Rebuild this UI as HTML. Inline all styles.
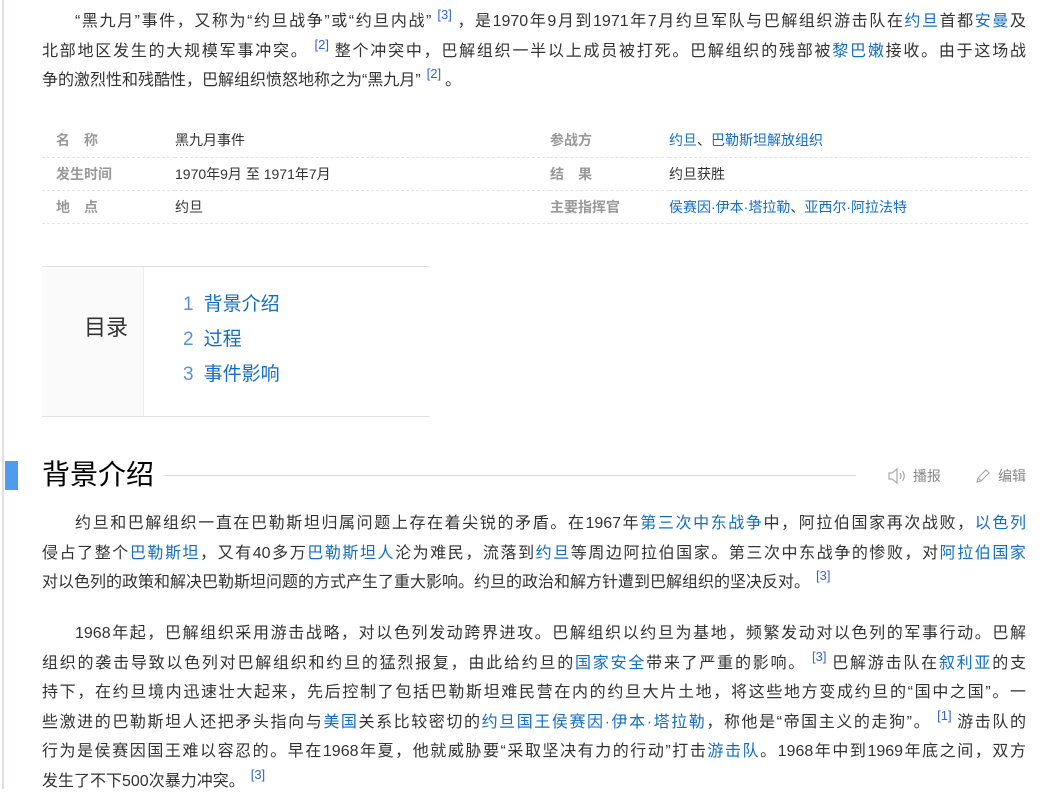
<!DOCTYPE html>
<html><head><meta charset="utf-8"><style>
*{margin:0;padding:0;box-sizing:border-box}
body{width:1056px;height:789px;overflow:hidden;background:#fff;font-family:"Liberation Sans","Noto Sans CJK SC",sans-serif;color:#333;position:relative}
.edge{position:absolute;left:2px;top:0;width:2px;height:789px;background:#e6dde2}
a{color:#136ec2;text-decoration:none}
sup{color:#3366cc;font-size:13px;line-height:0;vertical-align:baseline;position:relative;top:-7px;margin:0 4px 0 6px}
.p{position:absolute;left:42px;width:984px;font-size:16px;line-height:29.5px}
.p div{text-align:justify;text-align-last:justify;height:29.5px;white-space:nowrap;overflow:visible}
.p div.last{text-align-last:left}
.ind{padding-left:33px}
table{position:absolute;left:42px;top:124px;width:986px;border-collapse:collapse;font-size:14px}
td{height:33px;border-bottom:1px dashed #e4e4e4;padding:0;color:#333}
td.l{color:#999;font-weight:bold;padding-left:14px;width:133px}
td.v{width:375px}
td.l2{color:#999;font-weight:bold;width:119px}
.toc{position:absolute;left:42px;top:266px;width:387px;height:151px;border-top:1px solid #e0e0e0;border-bottom:1px solid #e0e0e0}
.toc .lp{position:absolute;left:0;top:0;width:102px;height:149px;background:#fafafa;border-right:1px solid #eee}
.toc .lp span{position:absolute;left:42px;top:43px;font-size:22px;color:#333}
.toc .it{position:absolute;left:141px;font-size:19px;color:#136ec2}
.toc .it b{font-weight:normal;color:#5c8fd6;margin-right:10px}
.bar{position:absolute;left:5px;top:461px;width:13px;height:29px;background:#4f9cee}
h2{position:absolute;left:42px;top:455px;font-size:28px;font-weight:normal;color:#000;line-height:40px}
.hl{position:absolute;left:163px;top:475px;width:693px;height:1px;background:#e0e0e0}
.tool{position:absolute;top:466px;font-size:14px;color:#888}
</style></head><body>
<div class="edge"></div>
<div class="p" style="top:7px">
<div class="ind">“黑九月”事件，又称为“约旦战争”或“约旦内战”<sup>[3]</sup>，是1970年9月到1971年7月约旦军队与巴解组织游击队在<a>约旦</a>首都<a>安曼</a>及</div>
<div>北部地区发生的大规模军事冲突。<sup>[2]</sup>整个冲突中，巴解组织一半以上成员被打死。巴解组织的残部被<a>黎巴嫩</a>接收。由于这场战</div>
<div class="last">争的激烈性和残酷性，巴解组织愤怒地称之为“黑九月”<sup>[2]</sup>。</div>
</div>
<table>
<tr><td class="l">名　称</td><td class="v">黑九月事件</td><td class="l2">参战方</td><td><a>约旦</a>、<a>巴勒斯坦解放组织</a></td></tr>
<tr><td class="l">发生时间</td><td class="v">1970年9月 至 1971年7月</td><td class="l2">结　果</td><td>约旦获胜</td></tr>
<tr><td class="l">地　点</td><td class="v">约旦</td><td class="l2">主要指挥官</td><td><a>侯赛因·伊本·塔拉勒</a>、<a>亚西尔·阿拉法特</a></td></tr>
</table>
<div class="toc"><div class="lp"><span>目录</span></div>
<div class="it" style="top:22px"><b>1</b>背景介绍</div>
<div class="it" style="top:57px"><b>2</b>过程</div>
<div class="it" style="top:92px"><b>3</b>事件影响</div>
</div>
<div class="bar"></div>
<h2>背景介绍</h2>
<div class="hl"></div>
<div class="tool" style="left:887px"><svg width="20" height="16" viewBox="0 0 20 16" style="vertical-align:-3px;margin-right:6px"><path d="M2 5h3l5-4v14l-5-4H2z" fill="none" stroke="#aaa" stroke-width="1.2"/><path d="M13 5q2 3 0 6M15.5 3q3.5 5 0 10" fill="none" stroke="#aaa" stroke-width="1.2"/></svg>播报</div>
<div class="tool" style="left:974px"><svg width="18" height="16" viewBox="0 0 18 16" style="vertical-align:-3px;margin-right:6px"><path d="M3 14l1-4 8-8 3 3-8 8z M4 10l3 3" fill="none" stroke="#aaa" stroke-width="1.2"/></svg>编辑</div>
<div class="p" style="top:509px">
<div class="ind">约旦和巴解组织一直在巴勒斯坦归属问题上存在着尖锐的矛盾。在1967年<a>第三次中东战争</a>中，阿拉伯国家再次战败，<a>以色列</a></div>
<div>侵占了整个<a>巴勒斯坦</a>，又有40多万<a>巴勒斯坦人</a>沦为难民，流落到<a>约旦</a>等周边阿拉伯国家。第三次中东战争的惨败，对<a>阿拉伯国家</a></div>
<div class="last">对以色列的政策和解决巴勒斯坦问题的方式产生了重大影响。约旦的政治和解方针遭到巴解组织的坚决反对。<sup>[3]</sup></div>
</div>
<div class="p" style="top:619px">
<div class="ind">1968年起，巴解组织采用游击战略，对以色列发动跨界进攻。巴解组织以约旦为基地，频繁发动对以色列的军事行动。巴解</div>
<div>组织的袭击导致以色列对巴解组织和约旦的猛烈报复，由此给约旦的<a>国家安全</a>带来了严重的影响。<sup>[3]</sup>巴解游击队在<a>叙利亚</a>的支</div>
<div>持下，在约旦境内迅速壮大起来，先后控制了包括巴勒斯坦难民营在内的约旦大片土地，将这些地方变成约旦的“国中之国”。一</div>
<div>些激进的巴勒斯坦人还把矛头指向与<a>美国</a>关系比较密切的<a>约旦国王侯赛因·伊本·塔拉勒</a>，称他是“帝国主义的走狗”。<sup>[1]</sup>游击队的</div>
<div>行为是侯赛因国王难以容忍的。早在1968年夏，他就威胁要“采取坚决有力的行动”打击<a>游击队</a>。1968年中到1969年底之间，双方</div>
<div class="last">发生了不下500次暴力冲突。<sup>[3]</sup></div>
</div>
</body></html>
